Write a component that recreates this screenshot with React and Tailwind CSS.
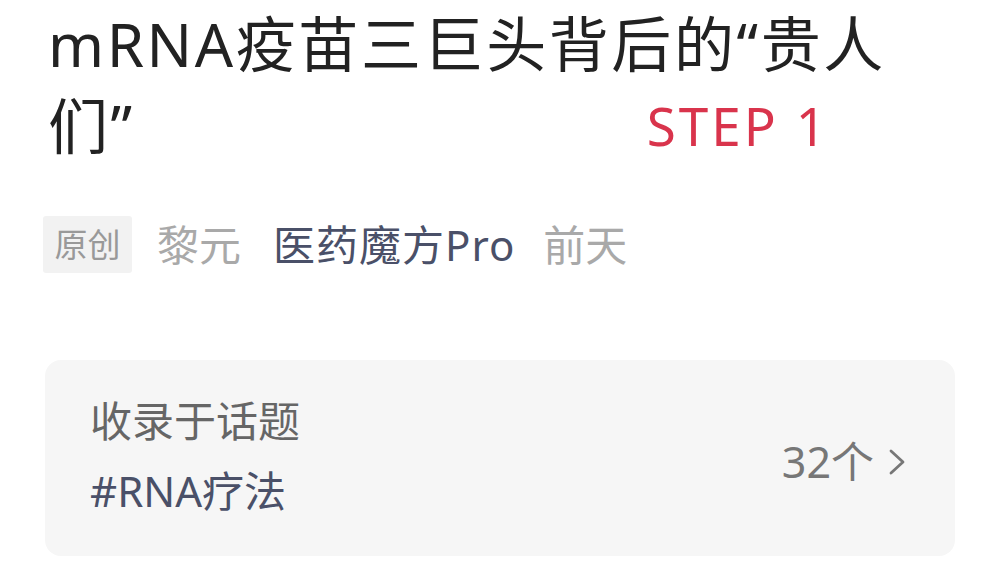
export default function App() {
  const font = { fontFamily: '"Noto Sans", "Noto Sans CJK SC", sans-serif' };
  return (
    <div className="w-[1000px] h-[562px] overflow-hidden bg-white" style={font}>
      <div className="pl-[48px] pr-[40px] pt-[3px]">
        <h1 className="font-normal text-[60px] leading-[82px] text-[#222222] tracking-[2.6px]">
          <span className="block">mRNA疫苗三巨头背后的“贵人</span>
          <span className="flex items-center">
            <span>们”</span>
            <span className="ml-[512px] text-[53px] leading-[64px] tracking-[3px] text-[#d9344c]">STEP 1</span>
          </span>
        </h1>
        <div className="-ml-[5px] mt-[46px] flex items-center">
          <span className="flex h-[57px] w-[89px] items-center justify-center rounded-[3px] bg-[#f2f2f2] text-[33px] text-[#999999]">
            原创
          </span>
          <span className="ml-[25px] text-[42px] text-[#a9a9a9]">黎元</span>
          <span className="ml-[32px] text-[42px] tracking-[1px] text-[#4a5068]">医药魔方Pro</span>
          <span className="ml-[28px] text-[42px] text-[#a9a9a9]">前天</span>
        </div>
      </div>
      <div className="mx-[45px] mt-[84px] flex h-[196px] items-center justify-between rounded-[16px] bg-[#f6f6f6] pl-[45px] pr-[49px]">
        <div className="flex flex-col gap-[14px] pb-[4px]">
          <span className="text-[42px] leading-[56px] text-[#666666]">收录于话题</span>
          <span className="text-[42px] leading-[56px] text-[#4a5068]">#RNA疗法</span>
        </div>
        <div className="flex items-center gap-[14px] pt-[8px] text-[43px] text-[#777777]">
          <span>32个</span>
          <svg width="18" height="30" viewBox="0 0 18 30" fill="none">
            <path d="M3 4 L15 15 L3 26" stroke="#777777" strokeWidth="2.8" strokeLinecap="round" strokeLinejoin="round" />
          </svg>
        </div>
      </div>
    </div>
  );
}
